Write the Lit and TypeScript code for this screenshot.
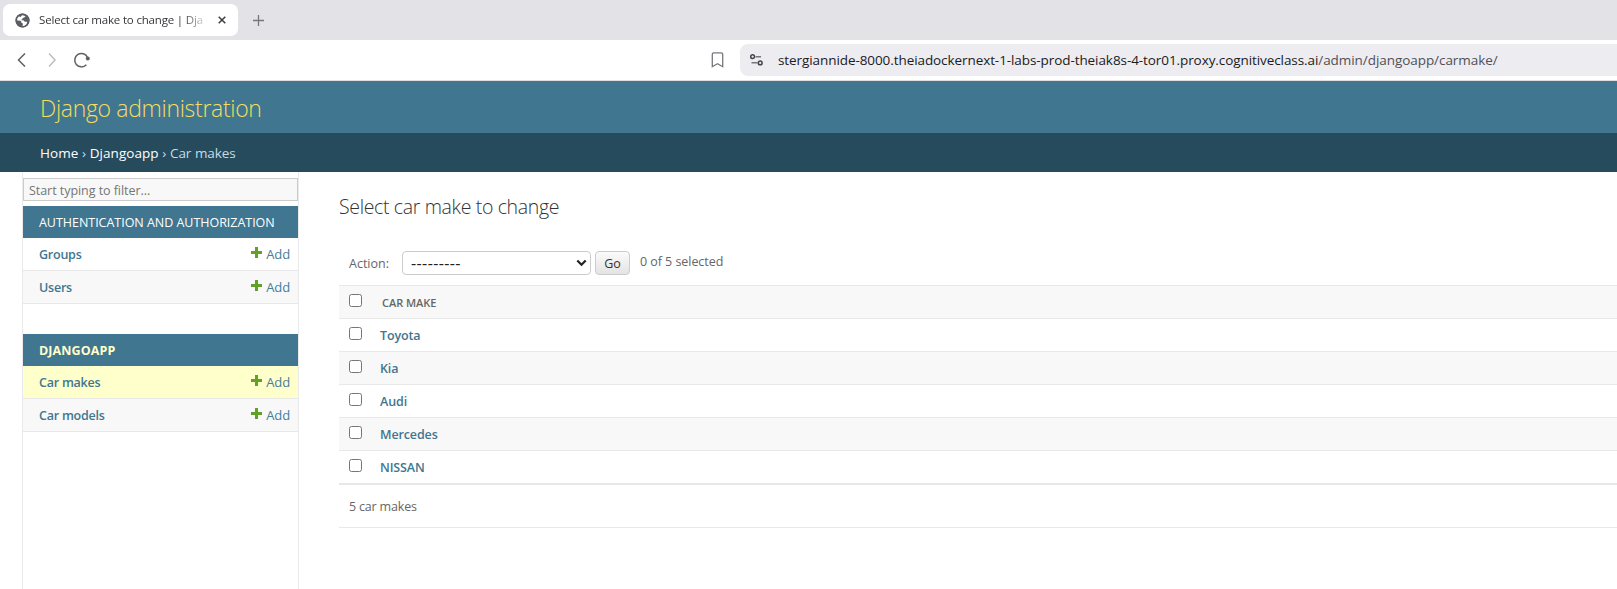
import { LitElement, html, css } from "lit";
import { customElement, property } from "lit/decorators.js";
import { classMap } from "lit/directives/class-map.js";

const FONT = css`"Open Sans", "Noto Sans", sans-serif`;

@customElement("browser-chrome")
class BrowserChrome extends LitElement {
  static styles = css`
    :host { display: block; font-family: ${FONT}; }
    svg { display: block; flex: none; }
    .strip { display: flex; align-items: center; height: 40px; background: #e3e2e7; padding-left: 3px; box-sizing: border-box; }
    .tab { display: flex; align-items: center; width: 235px; height: 32px; border-radius: 7px; background: #fff; box-sizing: border-box; padding-left: 12px; }
    .tab-title { width: 169px; margin-left: 9px; white-space: nowrap; font-size: 11.5px; letter-spacing: -0.18px; line-height: 20px; color: #35363a;
      -webkit-mask-image: linear-gradient(to right, #000 144px, transparent 170px); mask-image: linear-gradient(to right, #000 144px, transparent 170px); }
    .close { margin-left: 10px; }
    .plus { margin-left: 15px; }
    .toolbar { display: flex; align-items: center; height: 41px; box-sizing: border-box; background: #fff; border-bottom: 1px solid #dedee2; padding-left: 16px; }
    .fwd { margin-left: 18px; }
    .reload { margin-left: 15px; }
    .bookmark { margin-left: 620px; }
    .url { display: flex; align-items: center; flex: 1; height: 32px; margin-left: 16px; padding-left: 10px; background: #edecf1; border-radius: 8px 0 0 8px; font-size: 13.5px; letter-spacing: -0.08px; white-space: nowrap; color: #1b1b20; }
    .host { margin-left: 15px; }
    .path { color: #505058; letter-spacing: -0.06px; }
  `;
  render() {
    return html`
      <div class="strip">
        <div class="tab">
          <svg width="15" height="15" viewBox="0 0 15 15">
            <circle cx="7.5" cy="7.5" r="7" fill="#5a5e64" />
            <path d="M7 2.2c1.500 0 2.600.2 3.600.8l-1.300 1.600-1.600.5-.5 1.400-2 .6 3.600.4 1 1.200 2.500.1-.8 2.500-2.300 1.900-1.700-.3.500-2.100-1.700-1.200-.3-1.500L1.700 7.200c.1-1.600.8-2.900 1.900-3.900L5.600 4z" fill="#fff" />
            <circle cx="7.500" cy="7.500" r="6.300" fill="none" stroke="#5a5e64" stroke-width="1.500" />
          </svg>
          <div class="tab-title">Select car make to change | Dja</div>
          <svg class="close" width="8" height="8" viewBox="0 0 8 8"><path d="M.7.7l6.600 6.600M7.300.7L.7 7.300" stroke="#3c3d42" stroke-width="1.500" /></svg>
        </div>
        <svg class="plus" width="11" height="11" viewBox="0 0 11 11"><path d="M5.500 0v11M0 5.500h11" stroke="#77787d" stroke-width="1.300" /></svg>
      </div>
      <div class="toolbar">
        <svg width="12" height="14" viewBox="0 0 12 14"><path d="M9 .5L2.500 7 9 13.500" fill="none" stroke="#5f6066" stroke-width="1.500" /></svg>
        <svg class="fwd" width="12" height="14" viewBox="0 0 12 14"><path d="M3 .5L9 7l-6 6.500" fill="none" stroke="#bdbdc1" stroke-width="1.500" /></svg>
        <svg class="reload" width="18" height="16" viewBox="0 0 18 16"><path d="M13.400 12.700A6.700 6.700 0 1 1 14.600 5.500" fill="none" stroke="#5f6066" stroke-width="1.500" /><circle cx="14.800" cy="6.600" r="2" fill="#5f6066" /></svg>
        <svg class="bookmark" width="13" height="16" viewBox="0 0 13 16"><path d="M2.800.8h7.400a1.500 1.500 0 0 1 1.500 1.500v12.400L6.500 11.800 1.300 14.700V2.300A1.500 1.500 0 0 1 2.800.8z" fill="none" stroke="#77787d" stroke-width="1.300" /></svg>
        <div class="url">
          <svg width="13" height="12" viewBox="0 0 13 12" fill="none" stroke="#44454a" stroke-width="1.500"><circle cx="2.600" cy="2.700" r="1.900" /><path d="M5.500 2.700H11M1.500 8.800h6" stroke="#77787d" /><circle cx="10.200" cy="8.900" r="1.900" /></svg>
          <span class="host">stergiannide-8000.theiadockernext-1-labs-prod-theiak8s-4-tor01.proxy.cognitiveclass.ai</span><span class="path">/admin/djangoapp/carmake/</span>
        </div>
      </div>
    `;
  }
}

interface Model { name: string; current?: boolean; }

@customElement("app-module")
class AppModule extends LitElement {
  @property() caption = "";
  @property({ type: Boolean }) current = false;
  @property({ attribute: false }) models: Model[] = [];
  static styles = css`
    :host { display: block; font-family: ${FONT}; font-size: 12.5px; }
    .caption { height: 32px; line-height: 34px; padding-left: 16px; background: #417690; color: #fff; text-transform: uppercase; letter-spacing: -0.03px; }
    .caption.current { color: #ffc; font-weight: 700; letter-spacing: 0.1px; }
    .row { display: flex; align-items: center; justify-content: space-between; height: 32px; padding: 0 8px 0 16px; border-bottom: 1px solid #e8e8e8; }
    .row:nth-child(odd) { background: #f8f8f8; }
    .row.current { background: #ffc; }
    .name { color: #417690; font-weight: 600; letter-spacing: -0.23px; }
    .add { display: flex; align-items: center; gap: 4px; color: #447e9b; font-size: 13px; letter-spacing: -0.1px; }
    svg { display: block; margin-bottom: 4px; }
  `;
  render() {
    return html`
      <div class=${classMap({ caption: true, current: this.current })}>${this.caption}</div>
      ${this.models.map((m) => html`
        <div class=${classMap({ row: true, current: !!m.current })}>
          <span class="name">${m.name}</span>
          <span class="add">
            <svg width="11" height="11" viewBox="0 0 11 11"><path d="M4 0h3v4h4v3H7v4H4V7H0V4h4z" fill="#5fa225" /></svg>Add
          </span>
        </div>`)}
    `;
  }
}

@customElement("change-list")
class ChangeList extends LitElement {
  @property({ attribute: false }) makes: string[] = [];
  static styles = css`
    :host { display: block; font-family: ${FONT}; font-size: 12.5px; color: #666; }
    h1 { margin: 0; padding-top: 22px; height: 57px; line-height: 26px; font-size: 19.5px; font-weight: 300; letter-spacing: -0.35px; color: #333; }
    .actions { display: flex; align-items: center; height: 24px; padding: 0 0 10px 10px; }
    .select { display: grid; width: 189px; height: 24px; margin-left: 13px; }
    .select > * { grid-area: 1 / 1; }
    select { appearance: none; width: 100%; height: 24px; box-sizing: border-box; border: 1px solid #ccc; border-radius: 4px; background: #fff; color: #222; font: 16px/22px ${FONT}; letter-spacing: 0.4px; padding: 0 0 0 8px; }
    .arrow { justify-self: end; align-self: center; margin-right: 4px; pointer-events: none; }
    button { width: 35px; height: 24px; margin-left: 4px; padding: 0; box-sizing: border-box; border: 1px solid #ccc; border-radius: 4px; background: linear-gradient(#fbfbfb, #e3e3e3); color: #333; font: 12.5px ${FONT}; }
    .counter { margin: 0 0 4px 10px; letter-spacing: -0.05px; }
    .row { display: flex; align-items: center; height: 32px; border-bottom: 1px solid #e8e8e8; padding-left: 10px; }
    .row:nth-child(odd) { background: #f8f8f8; }
    .head { border-top: 1px solid #e8e8e8; }
    .row:last-child { border-bottom: 2px solid #e8e8e8; }
    input { width: 13px; height: 13px; margin: 0 0 3px; }
    .head-label { margin-left: 20px; font-size: 11px; font-weight: 600; text-transform: uppercase; letter-spacing: -0.05px; }
    .name { margin-left: 18px; color: #417690; font-weight: 600; letter-spacing: -0.12px; }
    .paginator { height: 42px; line-height: 44px; padding-left: 10px; border-bottom: 1px solid #e8e8e8; letter-spacing: -0.18px; }
  `;
  render() {
    return html`
      <h1>Select car make to change</h1>
      <div class="actions">
        <span>Action:</span>
        <div class="select">
          <select><option>---------</option></select>
          <svg class="arrow" width="11" height="8" viewBox="0 0 11 8"><path d="M1.300 1.500l4.200 4.200 4.200-4.200" fill="none" stroke="#222" stroke-width="2.200" /></svg>
        </div>
        <button>Go</button>
        <span class="counter">0 of ${this.makes.length} selected</span>
      </div>
      <div class="table">
        <div class="row head"><input type="checkbox" /><span class="head-label">Car make</span></div>
        ${this.makes.map((m) => html`<div class="row"><input type="checkbox" /><span class="name">${m}</span></div>`)}
      </div>
      <div class="paginator">${this.makes.length} car makes</div>
    `;
  }
}

@customElement("app-root")
class AppRoot extends LitElement {
  static styles = css`
    :host { display: flex; flex-direction: column; height: 589px; overflow: hidden; background: #fff; font-family: ${FONT}; }
    .header { flex: none; height: 52px; box-sizing: border-box; padding: 1px 0 0 40px; line-height: 52px; background: #417690; color: #f5dd5d; font-size: 23px; font-weight: 300; letter-spacing: -0.32px; }
    .crumbs { flex: none; height: 39px; line-height: 41px; padding-left: 40px; background: #264b5d; color: #c4dce8; font-size: 13.5px; letter-spacing: -0.1px; word-spacing: 0.3px; white-space: pre; }
    .crumbs b { color: #fff; font-weight: 500; letter-spacing: 0.05px; }
    .main { display: flex; flex: 1; min-height: 0; }
    .side { width: 275px; margin-left: 22px; padding-top: 6px; border: solid #eaeaea; border-width: 0 1px; display: flex; flex-direction: column; }
    .filter { height: 23px; flex: none; box-sizing: border-box; border: 1px solid #ccc; background: #f8f8f8; padding: 1px 5px 0; margin: 0 0 5px; font: 12.5px ${FONT}; letter-spacing: -0.05px; outline: none; }
    .filter::placeholder { color: #757575; }
    .gap { margin-bottom: 30px; }
    .list { flex: 1; margin-left: 40px; }
  `;
  render() {
    return html`
      <browser-chrome></browser-chrome>
      <div class="header">Django administration</div>
      <div class="crumbs"><b>Home</b> › <b>Djangoapp</b> › Car makes</div>
      <div class="main">
        <div class="side">
          <input class="filter" placeholder="Start typing to filter..." />
          <app-module class="gap" caption="Authentication and Authorization" .models=${[{ name: "Groups" }, { name: "Users" }]}></app-module>
          <app-module caption="Djangoapp" current .models=${[{ name: "Car makes", current: true }, { name: "Car models" }]}></app-module>
        </div>
        <change-list class="list" .makes=${["Toyota", "Kia", "Audi", "Mercedes", "NISSAN"]}></change-list>
      </div>
    `;
  }
}
